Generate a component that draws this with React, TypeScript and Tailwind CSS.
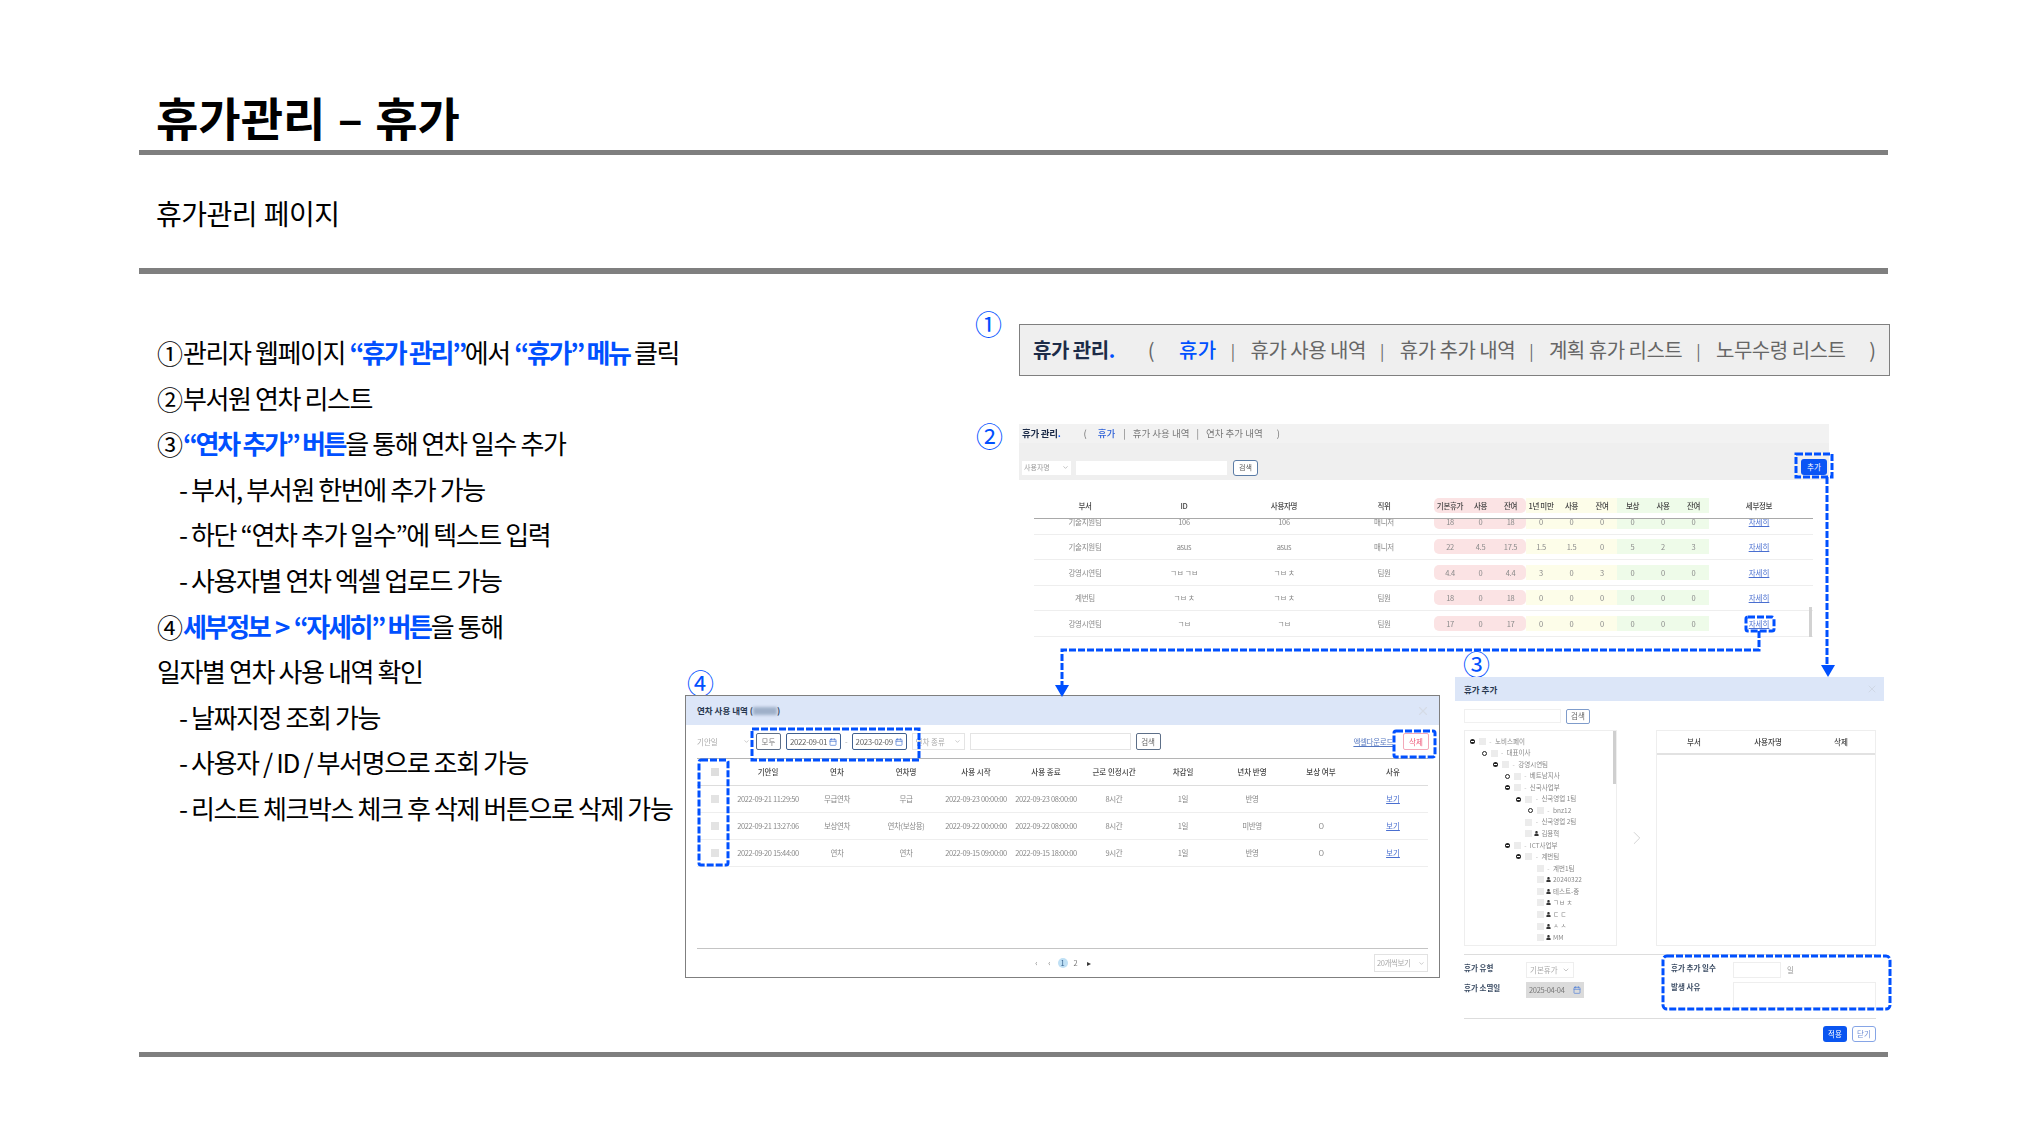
import React from 'react';
import { FaUser } from 'react-icons/fa';
import { X, ChevronRight, ChevronDown, Calendar } from 'lucide-react';

const BLUE = '#0050ff';

const Accent: React.FC<{ children: React.ReactNode }> = ({ children }) => (
  <span className="font-bold text-[#0050ff] tracking-[-2.3px]">{children}</span>
);

const listItems: { sub?: boolean; mark?: string; body: React.ReactNode }[] = [
  { mark: '①', body: <>관리자 웹페이지 <Accent>“휴가 관리”</Accent>에서 <Accent>“휴가” 메뉴</Accent> 클릭</> },
  { mark: '②', body: <>부서원 연차 리스트</> },
  { mark: '③', body: <><Accent>“연차 추가” 버튼</Accent>을 통해 연차 일수 추가</> },
  { sub: true, body: <>- 부서, 부서원 한번에 추가 가능</> },
  { sub: true, body: <>- 하단 “연차 추가 일수”에 텍스트 입력</> },
  { sub: true, body: <>- 사용자별 연차 엑셀 업로드 가능</> },
  { mark: '④', body: <><Accent>세부정보 <span className="mx-[2px]">&gt;</span> “자세히” 버튼</Accent>을 통해</> },
  { body: <>일자별 연차 사용 내역 확인</> },
  { sub: true, body: <>- 날짜지정 조회 가능</> },
  { sub: true, body: <>- 사용자 / ID / 부서명으로 조회 가능</> },
  { sub: true, body: <>- 리스트 체크박스 체크 후 삭제 버튼으로 삭제 가능</> },
];

const Mark: React.FC<{ className: string; children: string }> = ({ className, children }) => (
  <span className={`absolute text-[27px] leading-[30px] text-[#0050ff] ${className}`}>{children}</span>
);

// ② 부서원 목록 화면
const leaveCols = 'grid grid-cols-[102px_96px_104px_96px_34px_29px_31px_30px_31px_30px_31px_30px_31px_100px] items-center text-center';
const bandClass = (i: number) => {
  if (i === 4) return 'bg-[#fbe3e4] rounded-l-[5px] ml-[2px]';
  if (i === 5) return 'bg-[#fbe3e4]';
  if (i === 6) return 'bg-[#fbe3e4] rounded-r-[5px]';
  if (i >= 7 && i <= 9) return 'bg-[#fdfde9]';
  if (i >= 10 && i <= 12) return 'bg-[#eefbe9]';
  return '';
};
const leaveHead = ['부서', 'ID', '사용자명', '직위', '기본휴가', '사용', '잔여', '1년 미만', '사용', '잔여', '보상', '사용', '잔여', '세부정보'];
const leaveRows = [
  ['기술지원팀', '106', '106', '매니저', '18', '0', '18', '0', '0', '0', '0', '0', '0'],
  ['기술지원팀', 'asus', 'asus', '매니저', '22', '4.5', '17.5', '1.5', '1.5', '0', '5', '2', '3'],
  ['강영시연팀', 'ㄱㅂ ㄱㅂ', 'ㄱㅂ ㅊ', '팀원', '4.4', '0', '4.4', '3', '0', '3', '0', '0', '0'],
  ['계번팀', 'ㄱㅂ ㅊ', 'ㄱㅂ ㅊ', '팀원', '18', '0', '18', '0', '0', '0', '0', '0', '0'],
  ['강영시연팀', 'ㄱㅂ', 'ㄱㅂ', '팀원', '17', '0', '17', '0', '0', '0', '0', '0', '0'],
];

const LeaveList: React.FC = () => (
  <div className="absolute left-[1019px] top-[424px] w-[810px] h-[213px] blur-[0.45px]">
    <div className="h-[19px] bg-[#f2f2f2] flex items-center pl-[3px] text-[9.5px] text-[#777]">
      <span className="font-bold text-[#1c2b48] tracking-[-0.3px]">휴가 관리<span className="text-[#0050ff]">.</span></span>
      <span className="ml-[23px]">(</span>
      <span className="ml-[11px] font-medium text-[#2f62d8]">휴가</span>
      <span className="ml-[8px]">|</span>
      <span className="ml-[7px]">휴가 사용 내역</span>
      <span className="ml-[7px]">|</span>
      <span className="ml-[7px]">연차 추가 내역</span>
      <span className="ml-[14px]">)</span>
    </div>
    <div className="h-[37px] bg-[#efefef] flex items-center pl-[3px] pt-[12px] gap-[5px] text-[7px] text-[#999]">
      <div className="w-[49px] h-[14px] bg-white flex items-center justify-between px-[2px]">사용자명<ChevronDown size={7} /></div>
      <div className="w-[151px] h-[14px] bg-white" />
      <div className="w-[25px] h-[16px] ml-[1px] bg-white border border-[#5b7ca6] rounded-[3px] flex items-center justify-center text-[#555]">검색</div>
    </div>
    <div className="relative h-[157px] bg-white pl-[15px] pt-[18px] pr-[16px]">
      <div className={`${leaveCols} h-[15px] text-[7.5px] font-medium text-[#444]`}>
        {leaveHead.map((h, i) => (
          <div key={i} className={`h-[15px] leading-[15px] whitespace-nowrap tracking-[-0.3px] ${bandClass(i)}`}>{h}</div>
        ))}
      </div>
      <div className="h-[1px] mt-[5px] bg-[#a9a9a9]" />
      <div className="h-[118px] overflow-hidden">
        <div className="-mt-[10px]">
          {leaveRows.map((row, r) => (
            <div key={r} className={`${leaveCols} h-[25.5px] border-b border-[#eeeeee] text-[7.5px] text-[#8a8a8a]`}>
              {row.map((c, i) => (
                <div key={i} className={`h-[15px] leading-[15px] whitespace-nowrap tracking-[-0.3px] ${bandClass(i)}`}>{c}</div>
              ))}
              <div className="underline text-[#4a6fd0]">자세히</div>
            </div>
          ))}
        </div>
      </div>
      <div className="absolute right-[17px] bottom-0 w-[3px] h-[30px] bg-[#d2d2d2]" />
    </div>
  </div>
);

// ④ 연차 사용 내역 팝업
const historyCols = 'grid grid-cols-[36px_70px_68px_70px_70px_70px_66px_72px_66px_72px_72px] items-center text-center';
const historyHead = ['', '기안일', '연차', '연차명', '사용 시작', '사용 종료', '근로 인정시간', '차감일', '년차 반영', '보상 여부', '사유'];
const historyRows = [
  ['2022-09-21 11:29:50', '무급연차', '무급', '2022-09-23 00:00:00', '2022-09-23 08:00:00', '8시간', '1일', '반영', ''],
  ['2022-09-21 13:27:06', '보상연차', '연차(보상용)', '2022-09-22 00:00:00', '2022-09-22 08:00:00', '8시간', '1일', '미반영', 'O'],
  ['2022-09-20 15:44:00', '연차', '연차', '2022-09-15 09:00:00', '2022-09-15 18:00:00', '9시간', '1일', '반영', 'O'],
];

const HistoryPopup: React.FC = () => (
  <div className="absolute left-[685px] top-[695px] w-[755px] h-[283px] border-[1.5px] border-[#7f7f7f] bg-white">
    <div className="blur-[0.45px] h-full flex flex-col">
      <div className="h-[29px] bg-[#dce6f8] flex items-center justify-between pl-[11px] pr-[9px] text-[8.5px] font-bold text-[#26364f]">
        <span className="flex items-center">연차 사용 내역 (<span className="w-[24px] h-[8px] bg-[#9fb0c9] blur-[1.5px]" />)</span>
        <X size={14} className="text-[#d5dbe6]" />
      </div>
      <div className="flex items-center h-[33px] pl-[11px] pr-[10px] text-[7.5px] text-[#aaa]">
        <div className="w-[53px] flex items-center justify-between">기안일<ChevronDown size={7} /></div>
        <div className="ml-[6px] w-[25px] h-[17px] border border-[#5d6f88] rounded-[2px] flex items-center justify-center text-[#777]">모두</div>
        <div className="ml-[5px] w-[55px] h-[17px] border border-[#3f5f8e] rounded-[2px] flex items-center justify-between px-[3px] text-[8px] tracking-[-0.4px] text-[#666]">2022-09-01<Calendar size={8} className="text-[#3f6fd0]" /></div>
        <span className="ml-[4px]">-</span>
        <div className="ml-[4px] w-[55px] h-[17px] border border-[#3f5f8e] rounded-[2px] flex items-center justify-between px-[3px] text-[8px] tracking-[-0.4px] text-[#666]">2023-02-09<Calendar size={8} className="text-[#3f6fd0]" /></div>
        <div className="ml-[5px] w-[53px] h-[17px] border border-[#e4e4e4] flex items-center justify-between px-[3px]">연차 종류<ChevronDown size={7} /></div>
        <div className="ml-[5px] w-[161px] h-[17px] border border-[#e4e4e4]" />
        <div className="ml-[5px] w-[25px] h-[17px] border border-[#5d6f88] rounded-[2px] flex items-center justify-center text-[#666]">검색</div>
        <div className="ml-auto underline text-[#5577c0] tracking-[-0.3px]">엑셀다운로드</div>
        <div className="ml-[10px] w-[26px] h-[17px] border border-[#f3a9b9] rounded-[2px] flex items-center justify-center text-[#ee5577]">삭제</div>
      </div>
      <div className="mx-[11px] h-[1px] bg-[#b5b5b5]" />
      <div className={`${historyCols} mx-[11px] h-[27px] border-b border-[#dddddd] text-[7.5px] font-medium text-[#444]`}>
        {historyHead.map((h, i) => (
          <div key={i} className="flex justify-center">{i === 0 ? <span className="w-[8px] h-[8px] bg-[#dedede]" /> : h}</div>
        ))}
      </div>
      {historyRows.map((row, r) => (
        <div key={r} className={`${historyCols} mx-[11px] h-[27px] border-b border-[#eeeeee] text-[7.5px] text-[#888]`}>
          <div className="flex justify-center"><span className="w-[8px] h-[8px] bg-[#e3e3e3]" /></div>
          {row.map((c, i) => (
            <div key={i} className="whitespace-nowrap tracking-[-0.4px]">{c}</div>
          ))}
          <div className="underline text-[#4a6fd0]">보기</div>
        </div>
      ))}
      <div className="mt-auto mx-[11px] h-[29px] border-t border-[#c4c4c4] flex items-center text-[7.5px] text-[#777]">
        <div className="ml-[333px] flex items-center">
          <span className="w-[13px] text-center">‹</span>
          <span className="w-[13px] text-center">‹</span>
          <span className="w-[13px] flex justify-center">
            <span className="w-[10px] h-[10px] rounded-full bg-[#bfe0f5] text-[#35618f] flex items-center justify-center">1</span>
          </span>
          <span className="w-[13px] text-center">2</span>
          <span className="w-[13px] text-center text-[#333]">▸</span>
        </div>
        <div className="ml-auto w-[54px] h-[18px] border border-[#e2e2e2] flex items-center justify-between px-[2px] text-[#aaa] tracking-[-0.4px]">20개씩보기<ChevronDown size={7} /></div>
      </div>
    </div>
  </div>
);

// ③ 휴가 추가 팝업
const tree: { level: number; toggle?: 'minus' | 'plus'; user?: boolean; label: string }[] = [
  { level: 0, toggle: 'minus', label: '노비스페이' },
  { level: 1, toggle: 'plus', label: '대표이사' },
  { level: 2, toggle: 'minus', label: '강영시연팀' },
  { level: 3, toggle: 'plus', label: '베트남지사' },
  { level: 3, toggle: 'minus', label: '신국사업부' },
  { level: 4, toggle: 'minus', label: '신국영업 1팀' },
  { level: 5, toggle: 'plus', label: 'bnz12' },
  { level: 4, label: '신국영업 2팀' },
  { level: 4, user: true, label: '김용혁' },
  { level: 3, toggle: 'minus', label: 'ICT사업부' },
  { level: 4, toggle: 'minus', label: '계번팀' },
  { level: 5, label: '계번1팀' },
  { level: 5, user: true, label: '20240322' },
  { level: 5, user: true, label: '테스트-중' },
  { level: 5, user: true, label: 'ㄱㅂ ㅊ' },
  { level: 5, user: true, label: 'ㄷ ㄷ' },
  { level: 5, user: true, label: 'ㅅ ㅅ' },
  { level: 5, user: true, label: 'MM' },
];

const AddPopup: React.FC = () => (
  <div className="absolute left-[1455px] top-[677px] w-[429px] h-[366px] blur-[0.45px] text-[7.5px]">
    <div className="h-[24px] bg-[#dce6f8] flex items-center justify-between pl-[9px] pr-[6px] text-[8.5px] font-bold text-[#26364f]">
      휴가 추가
      <X size={12} className="text-[#d0d8e6]" />
    </div>
    <div className="pl-[9px] pr-[8px]">
      <div className="flex items-center gap-[5px] mt-[7px] h-[16px]">
        <div className="w-[97px] h-[14px] border border-[#f0f0f0]" />
        <div className="w-[24px] h-[15px] border border-[#7f9ccb] rounded-[2px] flex items-center justify-center text-[#666]">검색</div>
      </div>
      <div className="flex mt-[6px] h-[216px]">
        <div className="relative w-[153px] border border-[#eeeeee] pl-[4px] pt-[5px] overflow-hidden">
          {tree.map((n, i) => (
            <div key={i} className="flex items-center h-[11.53px] text-[6.5px] text-[#888] whitespace-nowrap" style={{ paddingLeft: n.level * 11.6 }}>
              <span className="w-[7px] flex justify-center">
                {n.toggle === 'minus' && (
                  <span className="w-[5px] h-[5px] rounded-full bg-[#222] flex items-center justify-center">
                    <span className="w-[3px] h-[1px] bg-white" />
                  </span>
                )}
                {n.toggle === 'plus' && <span className="w-[5px] h-[5px] rounded-full border-[1.5px] border-[#222]" />}
              </span>
              <span className="ml-[3px] w-[7px] h-[7px] bg-[#ececec]" />
              <span className="w-[9px] flex justify-center">
                {n.user ? <FaUser size={5} className="text-[#333]" /> : <span className="text-[#bbb]">-</span>}
              </span>
              <span>{n.label}</span>
            </div>
          ))}
          <div className="absolute right-0 top-0 w-[3px] h-[53px] bg-[#cfcfcf]" />
        </div>
        <div className="w-[39px] flex items-center justify-center">
          <ChevronRight size={22} strokeWidth={1} className="text-[#cfcfcf]" />
        </div>
        <div className="w-[220px] border border-[#eeeeee]">
          <div className="grid grid-cols-[74px_74px_72px] h-[24px] items-center text-center border-b-[2px] border-[#e2e2e2] font-medium text-[#444]">
            <span>부서</span>
            <span>사용자명</span>
            <span>삭제</span>
          </div>
        </div>
      </div>
      <div className="mt-[8px] h-[1px] bg-[#dddddd]" />
      <div className="flex h-[63px] pt-[7px] font-bold text-[#3a4b63]">
        <div className="w-[207px]">
          <div className="flex items-center h-[16px]">
            <span className="w-[62px] -mt-[4px]">휴가 유형</span>
            <div className="w-[48px] h-[16px] border border-[#eeeeee] flex items-center justify-between px-[3px] font-normal text-[#aaa]">기본휴가<ChevronDown size={8} /></div>
          </div>
          <div className="flex items-center h-[16px] mt-[4px]">
            <span className="w-[62px] -mt-[4px]">휴가 소멸일</span>
            <div className="w-[58px] h-[16px] bg-[#dbdbdb] flex items-center justify-between px-[3px] font-normal text-[#777] tracking-[-0.3px]">2025-04-04<Calendar size={8} className="text-[#4b7bd8]" /></div>
          </div>
        </div>
        <div>
          <div className="flex items-center h-[16px]">
            <span className="w-[62px] -mt-[4px]">휴가 추가 일수</span>
            <div className="w-[48px] h-[16px] border border-[#eeeeee]" />
            <span className="ml-[6px] font-normal text-[#999]">일</span>
          </div>
          <div className="flex mt-[4px]">
            <span className="w-[62px] -mt-[1px]">발생 사유</span>
            <div className="w-[143px] h-[26px] border border-[#eeeeee]" />
          </div>
        </div>
      </div>
      <div className="h-[1px] bg-[#dddddd]" />
      <div className="flex justify-end gap-[5px] mt-[7px]">
        <div className="w-[24px] h-[16px] rounded-[3px] bg-[#0a55f0] text-white flex items-center justify-center">적용</div>
        <div className="w-[24px] h-[16px] rounded-[3px] border border-[#86a5e6] text-[#6f8fd4] flex items-center justify-center">닫기</div>
      </div>
    </div>
  </div>
);

const Callouts: React.FC = () => (
  <svg className="absolute left-0 top-0 pointer-events-none" width={2027} height={1140} fill="none" stroke={BLUE} strokeWidth={3} strokeDasharray="7 2">
    <rect x={1796} y={454} width={36} height={23} />
    <rect x={1746} y={617} width={28} height={14} rx={2} />
    <rect x={752} y={729} width={167} height={31} />
    <rect x={699} y={760} width={29} height={105} rx={2} />
    <rect x={1394} y={731} width={41} height={26} rx={2} />
    <rect x={1663} y={956} width={227} height={53} rx={4} />
    <path d="M1759 631V650H1062V686" />
    <path d="M1827 477V667" />
    <polygon points="1055,685 1069,685 1062,697" fill={BLUE} stroke="none" />
    <polygon points="1821,665 1835,665 1828,677" fill={BLUE} stroke="none" />
  </svg>
);

export default function App() {
  return (
    <div className="relative w-[2027px] h-[1140px] overflow-hidden bg-white text-black font-['Noto_Sans_CJK_KR','Liberation_Sans',sans-serif]">
      <header className="ml-[139px] w-[1749px] pt-[83px]">
        <h1 className="pl-[17px] text-[46px] leading-[66px] font-bold [word-spacing:2px] h-[67px]">휴가관리 – 휴가</h1>
        <div className="h-[5px] bg-[#7f7f7f]" />
        <p className="pl-[17px] pt-[40px] text-[28px] leading-[36px] tracking-[-0.5px] [word-spacing:1px]">휴가관리 페이지</p>
        <div className="mt-[37px] h-[6px] bg-[#7f7f7f]" />
      </header>

      <ul className="ml-[157px] mt-[55px] text-[26px] tracking-[-1.4px]">
        {listItems.map((item, i) => (
          <li key={i} className={`h-[45.6px] leading-[45.6px] whitespace-nowrap ${item.sub ? 'pl-[22px]' : ''}`}>
            {item.mark && <span className="inline-block w-[26px] tracking-normal relative top-[1px]">{item.mark}</span>}
            {item.body}
          </li>
        ))}
      </ul>

      <div className="ml-[139px] mt-[221px] w-[1749px] h-[5px] bg-[#7f7f7f]" />

      <Mark className="left-[975px] top-[309px]">①</Mark>
      <Mark className="left-[976px] top-[421px]">②</Mark>
      <Mark className="left-[1463px] top-[649px]">③</Mark>
      <Mark className="left-[687px] top-[668px]">④</Mark>

      <nav className="absolute left-[1019px] top-[324px] w-[871px] h-[52px] bg-[#efefef] border border-[#7f7f7f] flex items-center pl-[13px] text-[20px] tracking-[-0.5px] text-[#666]">
        <span className="font-bold text-[#1c2b48]">휴가 관리<span className="text-[#0050ff]">.</span></span>
        <span className="ml-[33px]">(</span>
        <span className="ml-[25px] font-medium text-[#0050ff] tracking-[0.5px]">휴가</span>
        <span className="ml-[14px] text-[16px]">|</span>
        <span className="ml-[16px]">휴가 사용 내역</span>
        <span className="ml-[14px] text-[16px]">|</span>
        <span className="ml-[16px]">휴가 추가 내역</span>
        <span className="ml-[14px] text-[16px]">|</span>
        <span className="ml-[16px]">계획 휴가 리스트</span>
        <span className="ml-[14px] text-[16px]">|</span>
        <span className="ml-[16px]">노무수령 리스트</span>
        <span className="ml-[24px]">)</span>
      </nav>

      <LeaveList />
      <div className="absolute left-[1801px] top-[459px] w-[26px] h-[16px] rounded-[3px] bg-[#0a55f5] text-white text-[7.5px] flex items-center justify-center">추가</div>
      <HistoryPopup />
      <AddPopup />
      <Callouts />
    </div>
  );
}
